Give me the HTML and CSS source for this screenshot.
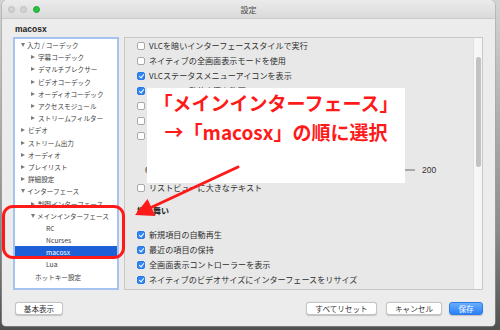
FILE: index.html
```html
<!DOCTYPE html>
<html lang="ja">
<head>
<meta charset="utf-8">
<title>設定</title>
<link rel="stylesheet" href="styles.css">
</head>
<body>
<div class="window">
  <div class="titlebar">
    <div class="lights">
      <span class="light"></span><span class="light"></span><span class="light green"></span>
    </div>
    <div class="title">設定</div>
    <div></div>
  </div>
  <div class="section-title">macosx</div>
  <div class="main">
    <div class="tree">
      <div class="row l1"><span class="tri down"></span>入力 / コーデック</div>
      <div class="row l2"><span class="tri"></span>字幕コーデック</div>
      <div class="row l2"><span class="tri"></span>デマルチプレクサー</div>
      <div class="row l2"><span class="tri"></span>ビデオコーデック</div>
      <div class="row l2"><span class="tri"></span>オーディオコーデック</div>
      <div class="row l2"><span class="tri"></span>アクセスモジュール</div>
      <div class="row l2"><span class="tri"></span>ストリームフィルター</div>
      <div class="row l1"><span class="tri"></span>ビデオ</div>
      <div class="row l1"><span class="tri"></span>ストリーム出力</div>
      <div class="row l1"><span class="tri"></span>オーディオ</div>
      <div class="row l1"><span class="tri"></span>プレイリスト</div>
      <div class="row l1"><span class="tri"></span>詳細設定</div>
      <div class="row l1"><span class="tri down"></span>インターフェース</div>
      <div class="row l2"><span class="tri"></span>制御インターフェース</div>
      <div class="row l2"><span class="tri down"></span>メインインターフェース</div>
      <div class="row leaf3">RC</div>
      <div class="row leaf3">Ncurses</div>
      <div class="row leaf3 selected">macosx</div>
      <div class="row leaf3">Lua</div>
      <div class="row leaf2">ホットキー設定</div>
    </div>
    <div class="panel">
      <div class="panel-content">
        <div class="opt"><span class="cb"></span>VLCを暗いインターフェーススタイルで実行</div>
        <div class="opt"><span class="cb"></span>ネイティブの全画面表示モードを使用</div>
        <div class="opt"><span class="cb on"></span>VLCステータスメニューアイコンを表示</div>
        <div class="opt"><span class="cb on"></span>アイコンの動的変更を許可</div>
        <div class="opt"><span class="cb"></span></div>
        <div class="opt"><span class="cb"></span></div>
        <div class="opt"><span class="cb"></span></div>
        <div class="slider-block">
          <div class="slider-row">
            <span class="slider-min">6</span>
            <span class="track"></span>
            <span class="slider-max">200</span>
          </div>
        </div>
        <div class="opt"><span class="cb"></span>リストビューに大きなテキスト</div>
        <div class="heading">振る舞い</div>
        <div class="opt"><span class="cb on"></span>新規項目の自動再生</div>
        <div class="opt"><span class="cb on"></span>最近の項目の保持</div>
        <div class="opt"><span class="cb on"></span>全画面表示コントローラーを表示</div>
        <div class="opt"><span class="cb on"></span>ネイティブのビデオサイズにインターフェースをリサイズ</div>
      </div>
      <div class="scrollbar"><div class="thumb"></div></div>
    </div>
  </div>
  <div class="footer">
    <button class="btn b-basic">基本表示</button>
    <div class="spacer"></div>
    <button class="btn b-reset">すべてリセット</button>
    <button class="btn b-cancel">キャンセル</button>
    <button class="btn b-save primary">保存</button>
  </div>
</div>

<div class="note">
  <div>「メインインターフェース」</div>
  <div>→「macosx」の順に選択</div>
</div>
<div class="ring"></div>
<svg class="arrow" width="500" height="330" viewBox="0 0 500 330">
  <line x1="238" y1="167" x2="150" y2="208" stroke="#ff1a1a" stroke-width="3" stroke-linecap="round"/>
  <polygon points="135,215 147.5,199 155.5,216" fill="#ff1a1a"/>
</svg>
</body>
</html>
```

FILE: styles.css
```css
* { box-sizing: border-box; }
html, body { margin: 0; padding: 0; }
body {
  width: 500px;
  height: 330px;
  overflow: hidden;
  background: linear-gradient(#d4d4d4, #8a8a8a 70%, #505050);
  font-family: "Noto Sans CJK JP", "Liberation Sans", sans-serif;
  color: #2b2b2b;
}
.window {
  margin-left: 2px;
  width: 493px;
  height: 326px;
  background: #ececec;
  border-radius: 5px 5px 4px 4px;
  display: flex;
  flex-direction: column;
  overflow: hidden;
  box-shadow: 0 0 0 0.5px #a0a0a0;
}
.titlebar {
  height: 19px;
  flex: none;
  display: grid;
  grid-template-columns: 1fr auto 1fr;
  align-items: center;
  background: linear-gradient(#ebebeb, #dadada);
  border-bottom: 1px solid #cbcbcb;
}
.lights { display: flex; gap: 5.5px; padding-left: 5.5px; padding-top: 1px; }
.light {
  width: 7px; height: 7px; border-radius: 50%;
  background: #d3d3d3; border: 0.5px solid #bcbcbc;
}
.light.green { background: #29c23f; border-color: #1ea531; }
.title { font-size: 8px; color: #4a4a4a; padding-top: 1px; }

.section-title {
  height: 18px; flex: none;
  padding-left: 13px; padding-top: 1px;
  font-family: "Liberation Sans", sans-serif;
  font-weight: bold; font-size: 8.5px; line-height: 18px; color: #222;
}
.main {
  height: 253px; flex: none;
  display: flex; gap: 5px;
  padding: 0 12px 0 11px;
}
.tree {
  width: 106px;
  background: #fff;
  border: 2px solid #a4c3ee;
  padding-top: 0;
}
.row {
  height: 12.2px;
  display: flex; align-items: center;
  font-size: 6.6px; color: #3c3c3c; white-space: nowrap;
}
.row.l1 { padding-left: 6px; }
.row.l2 { padding-left: 16px; }
.row.leaf3 { padding-left: 31px; font-size: 6.8px; }
.row.leaf2 { padding-left: 20px; }
.row.selected { background: #1c5fd7; color: #fff; }
.tri {
  width: 0; height: 0; margin-right: 3px;
  border-left: 4px solid #7b7b7b;
  border-top: 2.5px solid transparent;
  border-bottom: 2.5px solid transparent;
}
.tri.down {
  border-left: 2.5px solid transparent;
  border-right: 2.5px solid transparent;
  border-top: 4px solid #7b7b7b;
  border-bottom: 0;
  margin-right: 2px;
}

.panel {
  flex: 1;
  display: flex;
  background: #e8e8e8;
  border: 1px solid #c8c8c8;
}
.panel-content { flex: 1; padding-left: 12px; overflow: hidden; }
.opt {
  height: 15px;
  display: flex; align-items: center;
  font-size: 8.1px; color: #2e2e2e; white-space: nowrap;
}
.cb {
  width: 8px; height: 8px; flex: none;
  margin-right: 4px;
  background: #fff; border: 0.5px solid #a9a9a9; border-radius: 2px;
  position: relative;
}
.cb.on { background: #2f86f6; border-color: #2a78e0; }
.cb.on::after {
  content: ""; position: absolute;
  left: 2.4px; top: 0.6px; width: 2px; height: 4.2px;
  border: solid #fff; border-width: 0 1.2px 1.2px 0;
  transform: rotate(40deg);
}
.slider-block { height: 37px; padding-top: 20px; }
.slider-row { height: 14px; display: flex; align-items: center; font-size: 8.5px; color: #333; }
.slider-min { width: 8px; margin-left: 8px; font-family: "Liberation Sans", sans-serif; }
.track { width: 258px; height: 1.5px; background: #a8a8a8; margin-left: 4px; margin-right: 7px; }
.slider-max { font-family: "Liberation Sans", sans-serif; }
.heading {
  height: 15px; margin-top: 8px; margin-bottom: 9px;
  display: flex; align-items: center;
  font-size: 8px; font-weight: bold; color: #222;
}
.scrollbar { width: 9px; background: #f6f6f6; border-left: 1px solid #e0e0e0; }
.thumb { margin: 19px 0 0 2px; width: 4.5px; height: 110px; background: #c2c2c2; border-radius: 3px; }

.footer {
  flex: 1;
  display: flex; align-items: flex-start;
  padding: 12px 12px 0 13px;
}
.spacer { flex: 1; }
.btn {
  height: 13px; padding: 0; margin: 0;
  font-family: "Noto Sans CJK JP", sans-serif;
  font-size: 7.6px; color: #333;
  background: #fff;
  border: 0.5px solid #c4c4c4; border-radius: 3px;
  box-shadow: 0 0.5px 1px rgba(0,0,0,0.18);
  line-height: 12px;
}
.b-basic { width: 48px; }
.b-reset { width: 71px; }
.b-cancel { width: 56px; margin-left: 9px; }
.b-save { width: 34px; margin-left: 7px; }
.primary {
  background: linear-gradient(#69acfb, #2b80f5);
  border-color: #2d7ce8; color: #fff;
}

.note {
  position: absolute; left: 147px; top: 88px;
  width: 258px; height: 95px;
  background: #fff;
  color: #ff1a1a;
  font-family: "Noto Sans CJK JP", sans-serif;
  font-weight: bold; font-size: 19px; line-height: 29px;
  text-align: center;
}
.ring {
  position: absolute; left: 2px; top: 205px;
  width: 123px; height: 54px;
  border: 3px solid #ff1a1a; border-radius: 11px;
}
.arrow { position: absolute; left: 0; top: 0; pointer-events: none; }
```
